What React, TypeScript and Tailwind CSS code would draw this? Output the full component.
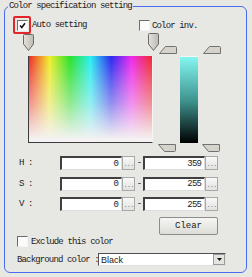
import React from "react";

const font = "font-['Liberation_Mono','DejaVu_Sans_Mono',monospace] text-[9px] tracking-[-0.85px] text-[#222] whitespace-nowrap";

function Check({ checked }: { checked?: boolean }) {
  return (
    <span className="flex h-[11px] w-[11px] items-center justify-center border-t border-l border-t-[#6c6c6c] border-l-[#6c6c6c] border-r border-b border-r-[#f4f4f4] border-b-[#f4f4f4] bg-[#fbfbfb]">
      {checked && (
        <svg width="7" height="7" viewBox="0 0 7 7">
          <path d="M1 3.5 L2.8 5.5 L6 1.2" fill="none" stroke="#111" strokeWidth="1.5" />
        </svg>
      )}
    </span>
  );
}

function Thumb({ h }: { h: number }) {
  return (
    <svg width="11" height={h} viewBox={`0 0 11 ${h}`} className="block">
      <defs>
        <linearGradient id={`tg${h}`} x1="0" x2="1" y1="0" y2="0">
          <stop offset="0" stopColor="#e4e2dc" />
          <stop offset="1" stopColor="#bdbab2" />
        </linearGradient>
      </defs>
      <path
        d={`M1.5 0.5 H9.5 Q10.5 0.5 10.5 1.5 V${h - 7} L5.5 ${h - 0.5} L0.5 ${h - 7} V1.5 Q0.5 0.5 1.5 0.5 Z`}
        fill={`url(#tg${h})`}
        stroke="#6a6a6a"
      />
    </svg>
  );
}

function Trap({ flip }: { flip?: boolean }) {
  const d = flip
    ? "M0.5 0.5 H17.5 V6.5 Q17.5 7.5 16.5 7.5 H6.5 Z"
    : "M6.5 0.5 H16.5 Q17.5 0.5 17.5 1.5 V7.5 H0.5 Z";
  return (
    <svg width="18" height="8" viewBox="0 0 18 8" className="block">
      <path d={d} fill="#d6d3cc" stroke="#727272" />
    </svg>
  );
}

function Field({ value }: { value: string }) {
  return (
    <div className="flex h-[14px] w-[62px] items-center justify-end border-t-2 border-l-2 border-t-[#404040] border-l-[#404040] border-r border-b border-r-[#dcdcdc] border-b-[#dcdcdc] bg-white pr-[3px]">
      {value}
    </div>
  );
}

function Dots() {
  return (
    <div className="flex h-[14px] w-[13px] items-center justify-center border border-[#a8a8a8] bg-[linear-gradient(to_bottom,#f8f8f8,#e2e2e0)] pt-[3px] text-[7px] leading-none text-[#808080]">
      ...
    </div>
  );
}

const rows = [
  { label: "H :", lo: "0", hi: "359" },
  { label: "S :", lo: "0", hi: "255" },
  { label: "V :", lo: "0", hi: "255" },
];

export default function App() {
  return (
    <div className={`h-[277px] w-[252px] overflow-hidden bg-[#e7e7e3] pl-[4px] pt-[1px] ${font}`}>
      <fieldset className="h-[272px] w-[243px] rounded-[6px] border border-[#4a6cf0]">
        <legend className="ml-[3px] px-[1px] leading-[10px]">Color specification setting</legend>

        {/* checkboxes */}
        <div className="mt-[5px] flex h-[17px] items-start leading-[10px]">
          <div className="flex w-[134px] items-center">
            <div className="ml-[8px] flex h-[18px] w-[18px] items-center justify-center rounded-[2px] border-2 border-[#e2262a]">
              <Check checked />
            </div>
            <span className="ml-[1px]">Auto setting</span>
          </div>
          <div className="mt-[4px] flex items-center">
            <Check />
            <span className="ml-[2px]">Color inv.</span>
          </div>
        </div>

        {/* slider handles */}
        <div className="flex h-[23px] items-start">
          <div className="ml-[18px] mt-[1px]">
            <Thumb h={17} />
          </div>
          <div className="ml-[114px]">
            <Thumb h={18} />
          </div>
          <div className="mt-[13px]">
            <Trap />
          </div>
          <div className="ml-[26px] mt-[13px]">
            <Trap />
          </div>
        </div>

        {/* spectrum and value bar */}
        <div className="flex h-[87px]">
          <div className="ml-[23px] h-[87px] w-[125px] border-l border-b border-l-[#3c3c3c] border-b-[#3c3c3c] border-r border-r-[#f6f6f6] bg-[image:linear-gradient(to_bottom,rgba(244,242,242,0.08),rgba(244,242,242,0.55)_55%,#f4f2f2_97%),linear-gradient(to_right,#f01818,#f0ec18,#18e018,#18eef0,#1818f0,#ee18ee,#f01818)]" />
          <div className="ml-[27px] h-[87px] w-[18px] border-t border-t-[#f6f6f6] bg-[linear-gradient(to_bottom,#84f6f0,#409590_50%,#000)]" />
        </div>

        <div className="flex h-[13px] items-start">
          <div className="ml-[153px] mt-[1px]">
            <Trap flip />
          </div>
          <div className="ml-[26px] mt-[1px]">
            <Trap flip />
          </div>
        </div>

        {/* H S V ranges */}
        <div className="flex flex-col gap-[6.5px] leading-[10px]">
          {rows.map((r) => (
            <div key={r.label} className="flex h-[14px] items-center">
              <span className="ml-[14px] w-[41px]">{r.label}</span>
              <Field value={r.lo} />
              <Dots />
              <span className="w-[8px] text-center">-</span>
              <Field value={r.hi} />
              <Dots />
            </div>
          ))}
        </div>

        <div className="mt-[6px] flex">
          <button className="ml-[154px] h-[18px] w-[59px] rounded-[2px] border border-[#8c8c8c] bg-[linear-gradient(to_bottom,#f6f6f4,#dcdcd8)] leading-[10px] tracking-[0px]">
            Clear
          </button>
        </div>

        <div className="mt-[1px] flex h-[11px] items-center leading-[10px]">
          <span className="ml-[12px]">
            <Check />
          </span>
          <span className="ml-[3px]">Exclude this color</span>
        </div>

        <div className="mt-[6px] flex h-[13px] items-center leading-[10px]">
          <span className="ml-[12px] w-[81px]">Background color :</span>
          <div className="flex h-[13px] w-[128px] items-center border-t border-l border-t-[#505050] border-l-[#505050] border-r border-b border-r-[#e0e0e0] border-b-[#e0e0e0] bg-white">
            <span className="ml-[2px] flex-1 font-['Liberation_Sans',sans-serif] text-[9px] tracking-normal">Black</span>
            <span className="flex h-[11px] w-[12px] items-center justify-center border border-[#9a9a9a] bg-[#e4e4e0]">
              <svg width="5" height="3" viewBox="0 0 5 3">
                <path d="M0 0 H5 L2.5 3 Z" fill="#111" />
              </svg>
            </span>
          </div>
        </div>
      </fieldset>
    </div>
  );
}
